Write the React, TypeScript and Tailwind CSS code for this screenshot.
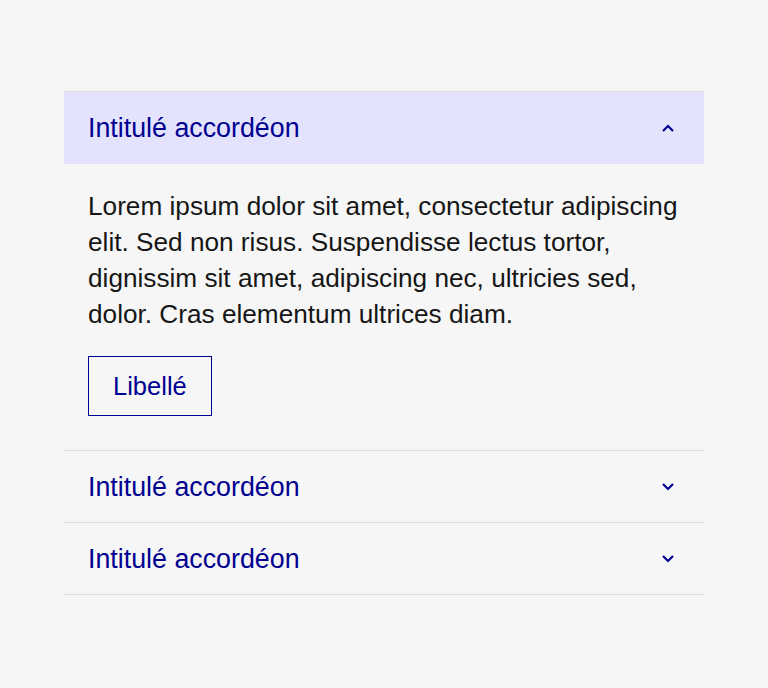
import React from "react";

const font = { fontFamily: '"Liberation Sans", Arial, sans-serif' };

function Chevron({ up }: { up?: boolean }) {
  return (
    <svg width="12" height="8" viewBox="0 0 12 8" className="shrink-0">
      <polyline
        points={up ? "1,7 6,2 11,7" : "1,1 6,6 11,1"}
        fill="none"
        stroke="#000091"
        strokeWidth="2.2"
      />
    </svg>
  );
}

function Header({ open }: { open?: boolean }) {
  return (
    <div
      className={`flex items-center justify-between pl-6 pr-[30px] ${
        open ? "h-[72px] bg-[#e3e3fd]" : "h-[71px]"
      }`}
    >
      <span className="whitespace-nowrap text-[26.8px] leading-[36px] text-[#000091]">
        Intitulé accordéon
      </span>
      <Chevron up={open} />
    </div>
  );
}

export default function App() {
  return (
    <div className="min-h-[688px] bg-[#f6f6f6] px-16 pt-[91px]" style={font}>
      <div className="w-full border-b border-[#dddddd]">
        <div className="border-t border-[#dddddd]">
          <Header open />
          <div className="px-6 pt-6 pb-[34px]">
            <p className="whitespace-nowrap text-[26.2px] leading-[36px] text-[#161616]">
              Lorem ipsum dolor sit amet, consectetur adipiscing
              <br />
              elit. Sed non risus. Suspendisse lectus tortor,
              <br />
              dignissim sit amet, adipiscing nec, ultricies sed,
              <br />
              dolor. Cras elementum ultrices diam.
            </p>
            <button className="mt-6 flex h-[60px] items-center border border-[#000091] px-6 text-[25.5px] text-[#000091]">
              Libellé
            </button>
          </div>
        </div>
        <div className="border-t border-[#dddddd]">
          <Header />
        </div>
        <div className="border-t border-[#dddddd]">
          <Header />
        </div>
      </div>
    </div>
  );
}
